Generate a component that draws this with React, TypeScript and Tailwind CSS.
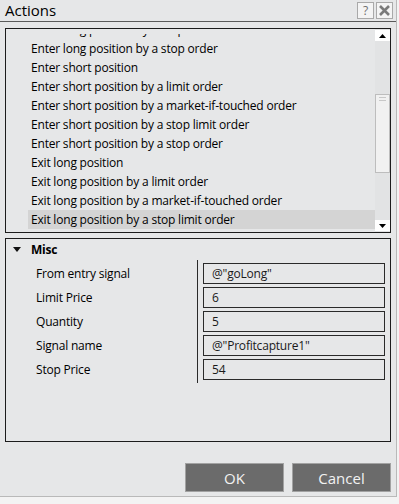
const ITEMS = [
  "Enter long position by a stop limit order",
  "Enter long position by a stop order",
  "Enter short position",
  "Enter short position by a limit order",
  "Enter short position by a market-if-touched order",
  "Enter short position by a stop limit order",
  "Enter short position by a stop order",
  "Exit long position",
  "Exit long position by a limit order",
  "Exit long position by a market-if-touched order",
  "Exit long position by a stop limit order",
];

const PROPS = [
  { label: "From entry signal", value: '@"goLong"' },
  { label: "Limit Price", value: "6" },
  { label: "Quantity", value: "5" },
  { label: "Signal name", value: '@"Profitcapture1"' },
  { label: "Stop Price", value: "54" },
];

function Arrow({ up }: { up?: boolean }) {
  return (
    <svg width="7" height="4" viewBox="0 0 7 4">
      <path d={up ? "M0 4 L3.5 0 L7 4 Z" : "M0 0 L3.5 4 L7 0 Z"} fill="#000" />
    </svg>
  );
}

export default function App() {
  return (
    <div className="h-[504px] w-[399px] bg-[#f3f3f3] font-['Open_Sans',sans-serif] text-[12px] tracking-[-0.2px] text-black">
      <div className="flex h-[497px] w-[397px] flex-col border-r border-b border-[#b9b9b9] bg-[#e6e7e8]">
        {/* title bar */}
        <div className="flex h-[22px] items-center justify-between border-b border-[#5a5a5a] pl-[5px] pr-[3px]">
          <span className="text-[15px] leading-none tracking-normal">Actions</span>
          <div className="flex gap-[2px]">
            <div className="flex h-[17px] w-[17px] items-center justify-center border border-[#a9a9a9] bg-[#f4f4f4] text-[12px] leading-none text-[#6f6f6f]">
              ?
            </div>
            <div className="flex h-[17px] w-[17px] items-center justify-center border border-[#a9a9a9] bg-[#f4f4f4]">
              <svg width="11" height="11" viewBox="0 0 11 11">
                <path d="M1 1 L10 10 M10 1 L1 10" stroke="#7a7a7a" strokeWidth="2.6" />
              </svg>
            </div>
          </div>
        </div>

        {/* action list */}
        <div className="ml-[5px] mt-[6px] flex h-[205px] w-[386px] border border-[#1c1c1c] bg-[#e6e7e8]">
          <div className="flex-1 pt-[5px]">
            <div className="h-full overflow-hidden">
              <div className="mt-[-14px] pl-[22px]">
                {ITEMS.map((item, i) => (
                  <div
                    key={item}
                    className={`h-[19px] pl-[3px] leading-[19px] whitespace-nowrap ${
                      i === ITEMS.length - 1 ? "bg-[#d4d4d4]" : ""
                    }`}
                  >
                    {item}
                  </div>
                ))}
              </div>
            </div>
          </div>
          <div className="flex w-[15px] flex-col bg-[#e2e3e4] py-[1px]">
            <div className="flex h-[11px] items-center justify-center bg-white">
              <Arrow up />
            </div>
            <div className="flex-1">
              <div className="mt-[53px] h-[79px] border border-[#bdbdbd] bg-[#f1f1f1] px-[3px] pt-[2px]">
                <div className="h-px bg-[#c8c8c8]" />
                <div className="mt-[2px] h-px bg-[#c8c8c8]" />
              </div>
            </div>
            <div className="flex h-[11px] items-center justify-center bg-white">
              <Arrow />
            </div>
          </div>
        </div>

        {/* property grid */}
        <div className="ml-[5px] mt-[5px] h-[204px] w-[386px] border border-[#1c1c1c]">
          <div className="flex h-[21px] items-center">
            <svg className="ml-[7px]" width="8" height="5" viewBox="0 0 8 5">
              <path d="M0 0 L4 5 L8 0 Z" fill="#111" />
            </svg>
            <span className="ml-[10px] font-bold">Misc</span>
          </div>
          <div className="flex">
            <div className="w-[192px] border-r border-[#2a2a2a] pt-[2px]">
              {PROPS.map((p) => (
                <div key={p.label} className="flex h-[24px] items-center pl-[30px]">
                  {p.label}
                </div>
              ))}
            </div>
            <div className="pl-[5px] pt-[3px]">
              {PROPS.map((p) => (
                <div
                  key={p.label}
                  className="mb-[3px] flex h-[21px] w-[182px] items-center border border-[#2a2a2a] pl-[8px] text-[#1a1a1a]"
                >
                  {p.value}
                </div>
              ))}
            </div>
          </div>
        </div>

        {/* buttons */}
        <div className="mt-[21px] flex justify-end gap-[8px] pr-[5px]">
          <button className="h-[29px] w-[99px] border border-[#a2a2a2] bg-[#6b6b6b] pt-[1px] text-[15px] tracking-normal text-[#f2f2f2]">
            OK
          </button>
          <button className="h-[29px] w-[99px] border border-[#a2a2a2] bg-[#6b6b6b] pt-[1px] text-[15px] tracking-normal text-[#f2f2f2]">
            Cancel
          </button>
        </div>
      </div>
    </div>
  );
}
